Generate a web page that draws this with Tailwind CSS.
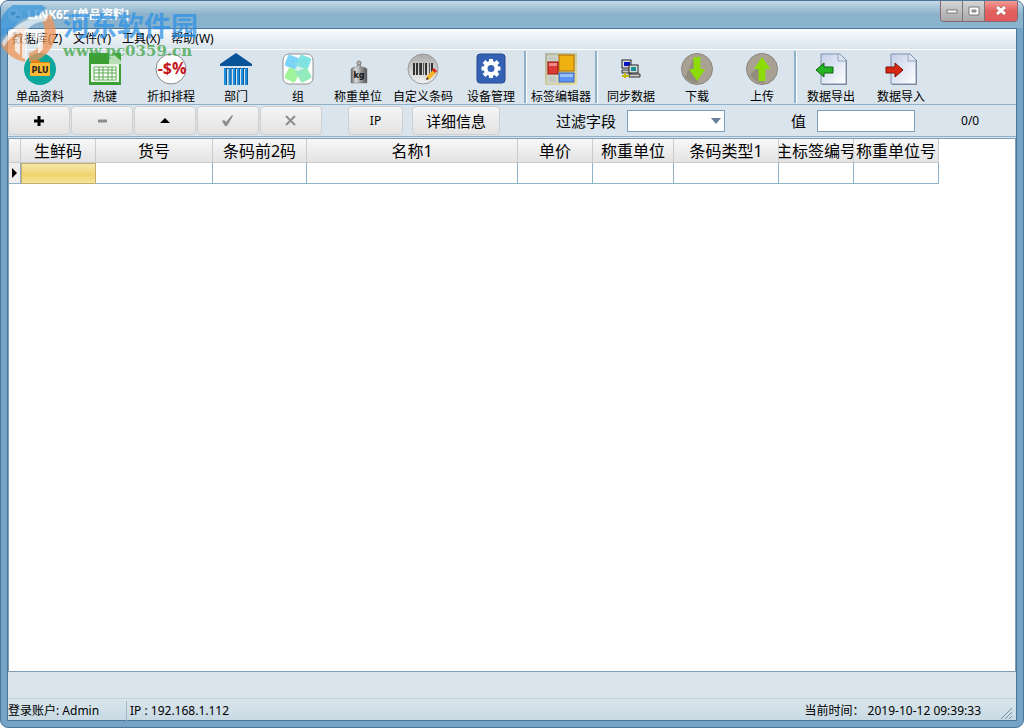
<!DOCTYPE html>
<html lang="zh-CN">
  <head>
    <meta charset="UTF-8" />
    <meta name="viewport" content="width=device-width, initial-scale=1.0" />
    <title>LINK65 [单品资料]</title>
    <script src="https://cdn.jsdelivr.net/npm/@tailwindcss/browser@4"></script>
  </head>
  <body class="bg-white font-['Noto_Sans','Noto_Sans_CJK_SC',sans-serif] text-xs text-black">
    <div class="relative min-h-screen flex flex-col rounded-lg border border-[#4a7599] bg-[#75a3c5] px-1.5 pb-1.5 overflow-hidden">

      <!-- Title bar -->
      <header class="-mx-1.5 h-[27px] shrink-0 flex items-start justify-between pl-1.5 pr-[5px] bg-linear-to-b from-[#c5d9e6] via-[#8ab2cb] via-50% to-[#8ab4cf]">
        <div class="flex items-center gap-1 pt-1">
          <svg class="w-4 h-4" viewBox="0 0 16 16">
            <circle cx="8" cy="8" r="7" fill="#b8cbd8" />
            <path d="M3 4h6v5H3zM8 8h6v4H8z" fill="#5c7890" stroke="#eee" />
          </svg>
          <h1 class="font-bold text-white leading-5">LINK65 [单品资料]</h1>
        </div>
        <div class="flex h-[21px] rounded-b border border-t-0 border-[#8b6670] overflow-hidden">
          <button aria-label="最小化" class="w-[22px] grid place-items-center border-r border-[#777] bg-linear-to-b from-[#d5d5d5] to-[#a9a9a9]">
            <svg width="12" height="12"><rect x="1" y="5" width="10" height="3" fill="#fff" stroke="#777" /></svg>
          </button>
          <button aria-label="最大化" class="w-[22px] grid place-items-center border-r border-[#777] bg-linear-to-b from-[#d5d5d5] to-[#a9a9a9]">
            <svg width="12" height="12"><path d="M1 2h10v8H1zM4 5v2h4V5z" fill="#fff" fill-rule="evenodd" stroke="#777" /></svg>
          </button>
          <button aria-label="关闭" class="w-8 grid place-items-center bg-linear-to-b from-[#ef9a95] via-[#e3605f] to-[#e05a5a]">
            <svg width="14" height="12"><path d="M3 2l8 7M11 2L3 9" stroke="#844" stroke-width="4" /><path d="M3 2l8 7M11 2L3 9" stroke="#fff" stroke-width="3" /></svg>
          </button>
        </div>
      </header>

      <main class="flex-1 flex flex-col border border-[#4c7697] bg-[#dae4ec]">
        <!-- Menu -->
        <nav class="h-[21px] shrink-0 flex items-center gap-[11px] pl-1 border-b border-white bg-linear-to-b from-[#fafcfd] to-[#d8e3eb]">
          <a href="#">数据库(Z)</a>
          <a href="#">文件(Y)</a>
          <a href="#">工具(X)</a>
          <a href="#">帮助(W)</a>
        </nav>

        <!-- Toolbar -->
        <div class="h-[55px] shrink-0 flex border-b border-[#8fb0c9] leading-[14px] whitespace-nowrap">
          <button class="w-16 flex flex-col items-center justify-end">
            <svg class="w-8 h-8 mb-[5px]" viewBox="0 0 32 32">
              <circle cx="16" cy="16" r="16" fill="#0da79b" />
              <path d="M7 7h8l2 2h9v14H7z" fill="#d98218" />
              <rect x="6" y="10" width="20" height="13" rx="1" fill="#fdb934" />
              <text x="16" y="20" font-size="8" font-weight="bold" text-anchor="middle" font-family="DejaVu Sans" fill="#222">PLU</text>
            </svg>
            单品资料
          </button>
          <button class="w-[66px] flex flex-col items-center justify-end">
            <svg class="w-8 h-8 mb-[5px]" viewBox="0 0 32 32">
              <path d="M0 0h20l12 11v21H0z" fill="#3c9f35" />
              <path d="M20 0h3l9 8v3H20z" fill="#b9dfb5" />
              <path d="M23 0h9v8z" fill="#45a83e" />
              <rect x="2" y="11" width="28" height="18" fill="#eaf5e8" />
              <path d="M5 14h22v13H5z" fill="#fff" stroke="#6ab464" />
              <path d="M5 17h22M5 20h22M5 24h22M10 14v13M14 14v13M19 14v13M23 14v13" stroke="#58aa51" />
            </svg>
            热键
          </button>
          <button class="w-[66px] flex flex-col items-center justify-end">
            <svg class="w-8 h-8 mb-[5px]" viewBox="0 0 32 32">
              <circle cx="16" cy="16" r="15" fill="#fff" stroke="#888" />
              <text x="17" y="21" font-size="16" font-weight="bold" text-anchor="middle" font-family="Open Sans" fill="#c4161c">-$%</text>
            </svg>
            折扣排程
          </button>
          <button class="w-16 flex flex-col items-center justify-end">
            <svg class="w-8 h-8 mb-[5px]" viewBox="0 0 32 32">
              <path d="M16 0l16 11v2H0v-2z" fill="#07549a" />
              <path d="M4 15h24v1H4z" fill="#0a5b9e" />
              <path d="M5.500 15v17M10 15v17M14.500 15v17M18.500 15v17M22.500 15v17M26.500 15v17" stroke="#1e8fdc" stroke-width="3" />
              <path d="M6.500 15v17M11 15v17M15.500 15v17M19.500 15v17M23.500 15v17M27.500 15v17" stroke="#0f5d9c" />
            </svg>
            部门
          </button>
          <button class="w-[60px] flex flex-col items-center justify-end">
            <svg class="w-8 h-8 mb-[5px]" viewBox="0 0 32 32">
              <rect x="1" y="1" width="30" height="30" rx="6" fill="#fff" stroke="#909090" />
              <rect x="4" y="3" width="12" height="12" rx="2" fill="#7bd3f8" transform="rotate(20 10 9)" />
              <rect x="16" y="3" width="12" height="12" rx="2" fill="#7fe2e2" transform="rotate(20 22 9)" />
              <rect x="4" y="16" width="12" height="12" rx="2" fill="#a0f59a" transform="rotate(28 10 22)" />
              <rect x="16" y="16" width="12" height="12" rx="2" fill="#93ebb9" transform="rotate(-28 22 22)" />
              <path d="M13 9h7v13h-7z" fill="#8de0d8" opacity=".4" />
            </svg>
            组
          </button>
          <button class="w-[60px] flex flex-col items-center justify-end">
            <svg class="w-8 h-8 mb-[5px]" viewBox="0 0 32 32">
              <defs>
                <linearGradient id="steel"><stop stop-color="#666" /><stop offset=".3" stop-color="#ddd" /><stop offset=".6" stop-color="#999" /><stop offset="1" stop-color="#555" /></linearGradient>
              </defs>
              <circle cx="17" cy="10" r="2" fill="#bbb" stroke="#777" />
              <path d="M9 16q1-2 6-2v-2h4v2q5 0 6 2v14H9z" fill="url(#steel)" stroke="#777" stroke-width=".5" />
              <text x="17" y="25" font-size="8" font-weight="bold" text-anchor="middle" font-family="DejaVu Sans" fill="#111">kg</text>
            </svg>
            称重单位
          </button>
          <button class="w-[70px] flex flex-col items-center justify-end">
            <svg class="w-8 h-8 mb-[5px]" viewBox="0 0 32 32">
              <defs>
                <linearGradient id="disc" x2="0" y2="1"><stop stop-color="#aaa" /><stop offset="1" stop-color="#f2f2f2" /></linearGradient>
              </defs>
              <circle cx="16" cy="16" r="15" fill="url(#disc)" stroke="#999" />
              <path d="M7 10v12M10 10v12M14 10v12M19 10v12M25 10v12" stroke="#333" stroke-width="2" />
              <path d="M12.500 10v12M16.500 10v12M22.500 10v12" stroke="#555" />
              <path d="M20 23l6-6 3 3-6 6-4 1z" fill="#f7b52b" />
              <path d="M25 17l2-2 3 3-2 2z" fill="#d22" />
              <path d="M19 27l1-3 2 2z" fill="#333" />
            </svg>
            自定义条码
          </button>
          <button class="w-[66px] flex flex-col items-center justify-end">
            <svg class="w-8 h-8 mb-[5px]" viewBox="0 0 32 32">
              <rect x="2" y="1" width="28" height="29" rx="3" fill="#3561b5" stroke="#27488b" />
              <circle cx="16" cy="15.500" r="5.500" fill="none" stroke="#fff" stroke-width="4" />
              <path d="M16 6v4M16 21v4M6.500 15.500h4M21.500 15.500h4M9 8.500l3 3M20 19.500l3 3M9 22.500l3-3M20 11.500l3-3" stroke="#fff" stroke-width="4" />
            </svg>
            设备管理
          </button>
          <div class="w-[3px] my-px border-l-2 border-r border-l-[#8fb0c9] border-r-white"></div>
          <button class="w-[68px] flex flex-col items-center justify-end">
            <svg class="w-8 h-8 mb-[5px]" viewBox="0 0 32 32">
              <defs>
                <linearGradient id="tan" x2="1" y2="1"><stop stop-color="#b2b59c" /><stop offset="1" stop-color="#eadf9c" /></linearGradient>
              </defs>
              <rect width="32" height="32" fill="url(#tan)" />
              <path d="M3 3h10v5H3zM3 22h9v8H3z" fill="#c5cac0" stroke="#ddd" />
              <rect x="14" y="2" width="15" height="16" fill="#eeb111" stroke="#a76d00" />
              <rect x="3" y="9" width="10" height="12" fill="#dd3a35" stroke="#911" />
              <path d="M4 10h8v3H4z" fill="#ee8a85" />
              <rect x="14" y="20" width="15" height="9" fill="#5b94f5" stroke="#3969bd" />
              <path d="M15 21h13v3H15z" fill="#9cc0fa" />
            </svg>
            标签编辑器
          </button>
          <div class="w-[3px] my-px border-l-2 border-r border-l-[#8fb0c9] border-r-white"></div>
          <button class="w-[66px] flex flex-col items-center justify-end">
            <svg class="w-8 h-8 mb-[5px]" viewBox="0 0 32 32">
              <rect x="7" y="7" width="9" height="8" fill="#ddd" stroke="#222" />
              <rect x="9" y="9" width="6" height="4" fill="#0010c0" />
              <path d="M7 17h10v3H7z" fill="#ccc" stroke="#333" />
              <rect x="14" y="12" width="9" height="8" fill="#ddd" stroke="#222" />
              <rect x="16" y="14" width="5" height="4" fill="#159090" />
              <path d="M14 21h11v3H14z" fill="#ccc" stroke="#333" />
              <path d="M7 23h7M10 20v5" stroke="#c8b800" stroke-width="2" />
            </svg>
            同步数据
          </button>
          <button class="w-[66px] flex flex-col items-center justify-end">
            <svg class="w-8 h-8 mb-[5px]" viewBox="0 0 32 32">
              <circle cx="16" cy="16" r="15.500" fill="#a9a294" stroke="#8b867c" />
              <path d="M13 4L4 24q6 7 13 6l-1-26z" fill="#918c7d" />
              <path d="M12.500 4h7v12h5L16 28 8 16h4.500z" fill="#8ddc08" />
            </svg>
            下载
          </button>
          <button class="w-16 flex flex-col items-center justify-end">
            <svg class="w-8 h-8 mb-[5px]" viewBox="0 0 32 32">
              <circle cx="16" cy="16" r="15.500" fill="#a9a294" stroke="#8b867c" />
              <path d="M10 16L4 22q5 8 14 8V16z" fill="#918c7d" />
              <path d="M12.500 28h7V16h5L16 4 8 16h4.500z" fill="#8ddc08" />
            </svg>
            上传
          </button>
          <div class="w-[3px] my-px border-l-2 border-r border-l-[#8fb0c9] border-r-white"></div>
          <button class="w-[68px] flex flex-col items-center justify-end">
            <svg class="w-8 h-8 mb-[5px]" viewBox="0 0 32 32">
              <defs>
                <linearGradient id="sheet" x2="1" y2="1"><stop stop-color="#c4cfe8" /><stop offset="1" stop-color="#fff" /></linearGradient>
              </defs>
              <path d="M7 31.500h24.500V7" fill="none" stroke="#777d88" />
              <path d="M6 1h19l6 6v24H6z" fill="url(#sheet)" stroke="#7e91b0" />
              <path d="M23 1v7h8" fill="#dde5f3" stroke="#8fa2c0" />
              <path d="M1 17l8-7v4h9v6H9v4z" fill="#25b523" stroke="#126212" />
            </svg>
            数据导出
          </button>
          <button class="w-[72px] flex flex-col items-center justify-end">
            <svg class="w-8 h-8 mb-[5px]" viewBox="0 0 32 32">
              <path d="M7 31.500h24.500V7" fill="none" stroke="#777d88" />
              <path d="M6 1h19l6 6v24H6z" fill="url(#sheet)" stroke="#7e91b0" />
              <path d="M23 1v7h8" fill="#dde5f3" stroke="#8fa2c0" />
              <path d="M18 17l-8-7v4H1v6h9v4z" fill="#d82615" stroke="#7c1209" />
            </svg>
            数据导入
          </button>
        </div>

        <!-- Record navigation and filter -->
        <div class="h-8 shrink-0 flex items-center border-b border-[#8fb0c9] text-[15px]">
          <div class="flex gap-px text-[#8d8d8d]">
            <button aria-label="添加" class="w-[62px] h-[29px] grid place-items-center rounded-sm border border-[#cfcfcf] bg-linear-to-b from-[#f5f5f5] to-[#e3e3e3] text-black">
              <svg width="12" height="12"><path d="M6 1v10M1 6h10" stroke="currentColor" stroke-width="3" /></svg>
            </button>
            <button aria-label="删除" class="w-[62px] h-[29px] grid place-items-center rounded-sm border border-[#cfcfcf] bg-linear-to-b from-[#f5f5f5] to-[#e3e3e3]">
              <svg width="12" height="12"><path d="M2 6h9" stroke="currentColor" stroke-width="3" /></svg>
            </button>
            <button aria-label="编辑" class="w-[62px] h-[29px] grid place-items-center rounded-sm border border-[#cfcfcf] bg-linear-to-b from-[#f5f5f5] to-[#e3e3e3] text-black">
              <svg width="12" height="12"><path d="M1 8l5-5 5 5z" fill="currentColor" /></svg>
            </button>
            <button aria-label="保存" class="w-[62px] h-[29px] grid place-items-center rounded-sm border border-[#cfcfcf] bg-linear-to-b from-[#f5f5f5] to-[#e3e3e3]">
              <svg width="14" height="12"><path d="M1 6l2-1 2 2 6-7 1 1-6 10H4z" fill="currentColor" /></svg>
            </button>
            <button aria-label="取消" class="w-[62px] h-[29px] grid place-items-center rounded-sm border border-[#cfcfcf] bg-linear-to-b from-[#f5f5f5] to-[#e3e3e3]">
              <svg width="12" height="12"><path d="M1 1l9 9M10 1l-9 9" stroke="currentColor" stroke-width="2" /></svg>
            </button>
          </div>
          <button class="ml-[26px] w-[55px] h-[29px] rounded-sm border border-[#cfcfcf] bg-linear-to-b from-[#f5f5f5] to-[#e3e3e3] text-xs">IP</button>
          <button class="ml-[9px] w-[88px] h-[29px] rounded-sm border border-[#cfcfcf] bg-linear-to-b from-[#f5f5f5] to-[#e3e3e3]">详细信息</button>
          <label for="field" class="ml-14">过滤字段</label>
          <div class="relative ml-[11px]">
            <select id="field" class="block w-[98px] h-[22px] appearance-none bg-white border border-[#7f9db5]"></select>
            <svg class="absolute right-1 top-2 pointer-events-none" width="10" height="6"><path d="M0 0h10L5 6z" fill="#66809a" /></svg>
          </div>
          <label for="value" class="ml-[66px]">值</label>
          <input id="value" type="text" class="ml-[11px] w-[98px] h-[22px] bg-white border border-[#7f9db5]" />
          <span class="ml-[46px] text-xs">0/0</span>
        </div>

        <!-- Item grid -->
        <div class="flex-1 mt-px border border-[#7f9db5] bg-white">
          <table class="table-fixed w-[930px] border-separate border-spacing-0">
            <colgroup>
              <col class="w-3" />
              <col class="w-[75px]" />
              <col class="w-[117px]" />
              <col class="w-[94px]" />
              <col class="w-[211px]" />
              <col class="w-[75px]" />
              <col class="w-[81px]" />
              <col class="w-[105px]" />
              <col class="w-[75px]" />
              <col class="w-[85px]" />
            </colgroup>
            <thead class="bg-linear-to-b from-[#f8f8f8] to-[#e2e2e2] text-base leading-[21px] whitespace-nowrap">
              <tr class="h-6 *:px-0 *:pt-0.5 *:pb-0 *:font-normal *:border-r *:border-b *:border-[#cbcbcb] *:overflow-hidden">
                <th></th>
                <th>生鲜码</th>
                <th>货号</th>
                <th>条码前2码</th>
                <th>名称1</th>
                <th>单价</th>
                <th>称重单位</th>
                <th>条码类型1</th>
                <th><div class="flex justify-center">主标签编号</div></th>
                <th>称重单位号</th>
              </tr>
            </thead>
            <tbody>
              <tr class="h-[21px] *:p-0 *:border-r *:border-b *:border-[#8fb0c9]">
                <td class="bg-[#eee]">
                  <svg class="mx-auto" width="6" height="10"><path d="M0 0l5 5-5 5z" /></svg>
                </td>
                <td class="bg-linear-to-b from-[#f8e8b0] via-[#f0d46c] via-60% to-[#f6e39c] outline -outline-offset-1 outline-[#c3ae6c]"></td>
                <td></td>
                <td></td>
                <td></td>
                <td></td>
                <td></td>
                <td></td>
                <td></td>
                <td></td>
              </tr>
            </tbody>
          </table>
        </div>

        <!-- Status bar -->
        <footer class="mt-[26px] h-[22px] shrink-0 flex items-center pt-0.5 border-t border-[#c5d2dc] bg-linear-to-b from-[#dae5eb] to-[#c8dae4]">
          <span class="w-[119px] h-5 leading-5 border-r border-[#a3bac9]">登录账户: Admin</span>
          <span class="ml-[3px]">IP : 192.168.1.112</span>
          <span class="ml-auto">当前时间： 2019-10-12 09:39:33</span>
          <svg class="ml-5 mr-1 mt-1.5" width="11" height="11"><path d="M0 11L11 0M4 11l7-7M8 11l3-3" stroke="#7796ab" /></svg>
        </footer>
      </main>

      <!-- Watermark -->
      <div class="absolute left-0 top-1 flex pointer-events-none opacity-75">
        <svg class="w-[58px] h-[58px]" viewBox="0 0 58 58">
          <path d="M0 33A28 28 0 0 1 45 3L38 10Q22 11 13 22 6 27 0 33z" fill="#3b97dc" />
          <path d="M0 39Q10 27 24 20v37Q6 53 0 39z" fill="#ee9354" />
          <path d="M49 9Q60 28 50 43 42 56 28 57V48q12-4 15-16 2-9-2-17z" fill="#ee9354" />
          <path d="M1 37Q16 13 48 9l-3 7Q32 17 26 25v29l-5-1V28Q9 30 3 42z" fill="#fff" opacity=".8" />
          <path d="M14 33l5-3v20l-5-4zM30 27h12v17l-5 5V33h-7z" fill="#fff" opacity=".8" />
        </svg>
        <div class="pl-1 pt-1">
          <div class="text-[27px] leading-8 font-bold text-[#2f92e4] font-['Noto_Sans_CJK_SC',sans-serif]">河东软件园</div>
          <div class="text-[15px] leading-5 font-bold text-[#3fa447] font-['DejaVu_Serif',serif]">www.pc0359.cn</div>
        </div>
      </div>
    </div>
  </body>
</html>
